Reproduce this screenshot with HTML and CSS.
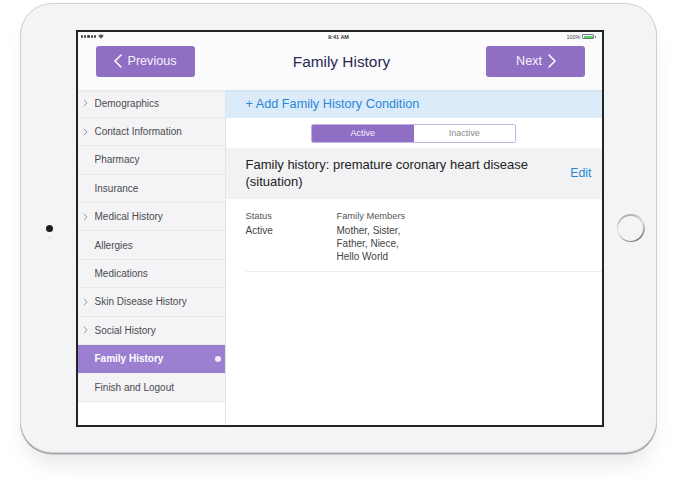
FILE: index.html
```html
<!DOCTYPE html>
<html>
<head>
<meta charset="utf-8">
<title>Family History</title>
<link rel="stylesheet" href="styles.css">
</head>
<body>
<div class="stage">
  <div class="ipad">
    <div class="bezel-left">
      <div class="camera"></div>
      <div class="sensor"></div>
    </div>
    <div class="screen">
      <div class="statusbar">
        <div class="sb-left">
          <span class="dots"><i></i><i></i><i></i><i></i><i></i></span>
          <svg class="wifi" width="6" height="5" viewBox="0 0 12 9"><path d="M6 9 L0.5 3 A8 8 0 0 1 11.5 3 Z" fill="#555"/></svg>
        </div>
        <div class="sb-time">9:41 AM</div>
        <div class="sb-right">
          <span class="pct">100%</span>
          <span class="battery"><span class="battery-fill"></span></span>
          <span class="battery-nub"></span>
        </div>
      </div>
      <header class="topbar">
        <button class="navbtn">
          <svg width="8" height="14" viewBox="0 0 8 14"><polyline points="7,1 1,7 7,13" fill="none" stroke="#fff" stroke-width="1.5" stroke-linecap="round" stroke-linejoin="round"/></svg>
          <span>Previous</span>
        </button>
        <h1 class="title">Family History</h1>
        <button class="navbtn">
          <span>Next</span>
          <svg width="8" height="14" viewBox="0 0 8 14"><polyline points="1,1 7,7 1,13" fill="none" stroke="#fff" stroke-width="1.5" stroke-linecap="round" stroke-linejoin="round"/></svg>
        </button>
      </header>
      <div class="main">
        <nav class="sidebar">
          <div class="item"><span class="chev"><svg width="5" height="8" viewBox="0 0 5 8"><polyline points="1,0.8 4,4 1,7.2" fill="none" stroke="#8a8a8e" stroke-width="0.9"/></svg></span>Demographics</div>
          <div class="item"><span class="chev"><svg width="5" height="8" viewBox="0 0 5 8"><polyline points="1,0.8 4,4 1,7.2" fill="none" stroke="#8a8a8e" stroke-width="0.9"/></svg></span>Contact Information</div>
          <div class="item"><span class="chev"></span>Pharmacy</div>
          <div class="item"><span class="chev"></span>Insurance</div>
          <div class="item"><span class="chev"><svg width="5" height="8" viewBox="0 0 5 8"><polyline points="1,0.8 4,4 1,7.2" fill="none" stroke="#8a8a8e" stroke-width="0.9"/></svg></span>Medical History</div>
          <div class="item"><span class="chev"></span>Allergies</div>
          <div class="item"><span class="chev"></span>Medications</div>
          <div class="item"><span class="chev"><svg width="5" height="8" viewBox="0 0 5 8"><polyline points="1,0.8 4,4 1,7.2" fill="none" stroke="#8a8a8e" stroke-width="0.9"/></svg></span>Skin Disease History</div>
          <div class="item"><span class="chev"><svg width="5" height="8" viewBox="0 0 5 8"><polyline points="1,0.8 4,4 1,7.2" fill="none" stroke="#8a8a8e" stroke-width="0.9"/></svg></span>Social History</div>
          <div class="item active"><span class="chev"></span><span class="label">Family History</span><span class="dot"></span></div>
          <div class="item"><span class="chev"></span>Finish and Logout</div>
        </nav>
        <section class="content">
          <div class="addbar">+ Add Family History Condition</div>
          <div class="segrow">
            <div class="segment">
              <div class="seg on">Active</div>
              <div class="seg">Inactive</div>
            </div>
          </div>
          <div class="cardhead">
            <div class="cardtitle">Family history: premature coronary heart disease (situation)</div>
            <div class="edit">Edit</div>
          </div>
          <div class="details">
            <div class="lbl">Status</div>
            <div class="lbl">Family Members</div>
            <div class="val">Active</div>
            <div class="val">Mother, Sister,<br>Father, Niece,<br>Hello World</div>
          </div>
        </section>
      </div>
    </div>
    <div class="bezel-right">
      <div class="home"><div class="home-inner"></div></div>
    </div>
  </div>
</div>
</body>
</html>
```
FILE: styles.css
```css
* { box-sizing: border-box; }
html, body { margin: 0; padding: 0; background: #ffffff; }
body { font-family: "Liberation Sans", Arial, sans-serif; width: 686px; height: 499px; overflow: hidden; }

.stage { padding: 3px 0 0 20px; }

.ipad {
  width: 637px;
  height: 450px;
  border-radius: 32px;
  background: #f3f4f6;
  border: 1.5px solid #cfd0d3;
  box-shadow: 0 1.5px 0 #a4a5a8, 0 16px 22px -6px rgba(0,0,0,0.10);
  display: flex;
}

.bezel-left {
  width: 54.5px;
  display: flex;
  flex-direction: column;
  align-items: center;
  justify-content: center;
  padding-top: 8px;
  padding-left: 2px;
}
.camera { width: 7px; height: 7px; border-radius: 50%; background: #1d1d1f; }
.sensor { width: 3px; height: 3px; border-radius: 50%; background: #e6e7ea; margin-top: 4px; }

.screen {
  width: 528px;
  height: 397.5px;
  margin-top: 25.5px;
  border: 2px solid #242426;
  background: #ffffff;
  display: flex;
  flex-direction: column;
  overflow: hidden;
}

.statusbar {
  height: 10px;
  flex: none;
  background: #fbfbfd;
  display: flex;
  align-items: center;
  justify-content: space-between;
  padding: 0 5px 0 3px;
  font-size: 5.5px;
  color: #333;
  position: relative;
}
.sb-left { display: flex; align-items: center; gap: 2px; width: 60px; }
.dots { display: flex; gap: 1px; }
.dots i { display: block; width: 2.4px; height: 2.4px; border-radius: 50%; background: #444; }
.sb-time { font-weight: bold; color: #333; }
.sb-right { display: flex; align-items: center; justify-content: flex-end; width: 60px; gap: 1px; }
.pct { font-size: 5.5px; color: #444; margin-right: 1px; }
.battery { width: 12px; height: 5px; border: 0.6px solid #777; border-radius: 1px; padding: 0.5px; display: flex; }
.battery-fill { flex: 1; background: #4cd964; border-radius: 0.5px; }
.battery-nub { width: 1px; height: 2px; background: #777; }

.topbar {
  height: 48px;
  flex: none;
  background: #fbfbfd;
  display: flex;
  align-items: flex-start;
  justify-content: space-between;
  padding: 4px 16px 0 18px;
  box-shadow: 0 1px 2px rgba(0,0,0,0.07);
  position: relative;
  z-index: 1;
}
.navbtn {
  width: 99px;
  height: 31px;
  border: none;
  border-radius: 3px;
  background: #8e6fc3;
  color: #f6f2fc;
  font-family: "Liberation Sans", Arial, sans-serif;
  font-size: 12.6px;
  display: flex;
  align-items: center;
  justify-content: center;
  gap: 6px;
  padding: 0;
}
.title {
  margin: 0;
  line-height: 31px;
  font-size: 15.4px;
  font-weight: normal;
  color: #2a2850;
  padding-left: 2px;
}

.main { flex: 1; display: flex; min-height: 0; }

.sidebar {
  width: 148px;
  flex: none;
  border-right: 1px solid #e4e4e7;
  background: #ffffff;
}
.item {
  height: 28.4px;
  background: #f4f4f6;
  border-bottom: 1px solid #e8e8eb;
  display: flex;
  align-items: center;
  font-size: 10px;
  color: #4b4b4e;
}
.chev { width: 17px; flex: none; display: flex; align-items: center; padding-left: 5.5px; }
.item.active { background: #9b7fd0; border-bottom-color: #9b7fd0; color: #ffffff; font-weight: bold; }
.item.active .label { flex: 1; }
.dot { width: 6px; height: 6px; border-radius: 50%; background: #f2eefa; margin-right: 4px; }

.content { flex: 1; display: flex; flex-direction: column; background: #ffffff; }

.addbar {
  height: 28px;
  background: #dcebfa;
  color: #2a87d6;
  font-size: 12.7px;
  display: flex;
  align-items: center;
  padding-left: 20px;
}

.segrow { height: 30px; display: flex; justify-content: center; padding-top: 6px; }
.segment {
  width: 205px;
  height: 19px;
  border: 1px solid #c3b2e2;
  border-radius: 2px;
  display: flex;
  overflow: hidden;
}
.seg {
  flex: 1;
  display: flex;
  align-items: center;
  justify-content: center;
  font-size: 9px;
  color: #8a8a8e;
  background: #ffffff;
}
.seg.on { background: #8f6fc4; color: #f4f0fb; }

.cardhead {
  height: 51px;
  background: #f2f2f4;
  display: flex;
  align-items: center;
  padding: 0 10px 0 20px;
}
.cardtitle { flex: 1; font-size: 13px; line-height: 17px; color: #222; padding-right: 20px; }
.edit { font-size: 12.4px; color: #2a87d6; }

.details {
  display: grid;
  grid-template-columns: 91px 1fr;
  margin-left: 20px;
  padding: 10px 0 8px;
  border-bottom: 1px solid #ececee;
  row-gap: 1px;
}
.lbl { font-size: 9.3px; line-height: 14px; color: #555; }
.val { font-size: 10px; line-height: 13px; color: #444; }

.bezel-right { flex: 1; display: flex; align-items: center; justify-content: center; padding-left: 2px; }
.home {
  width: 28px;
  height: 28px;
  border-radius: 50%;
  padding: 1.5px;
  background: linear-gradient(160deg, #9a9a9c 0%, #e2e2e4 45%, #5a5a5c 100%);
}
.home-inner { width: 100%; height: 100%; border-radius: 50%; background: #f3f4f6; }
```
